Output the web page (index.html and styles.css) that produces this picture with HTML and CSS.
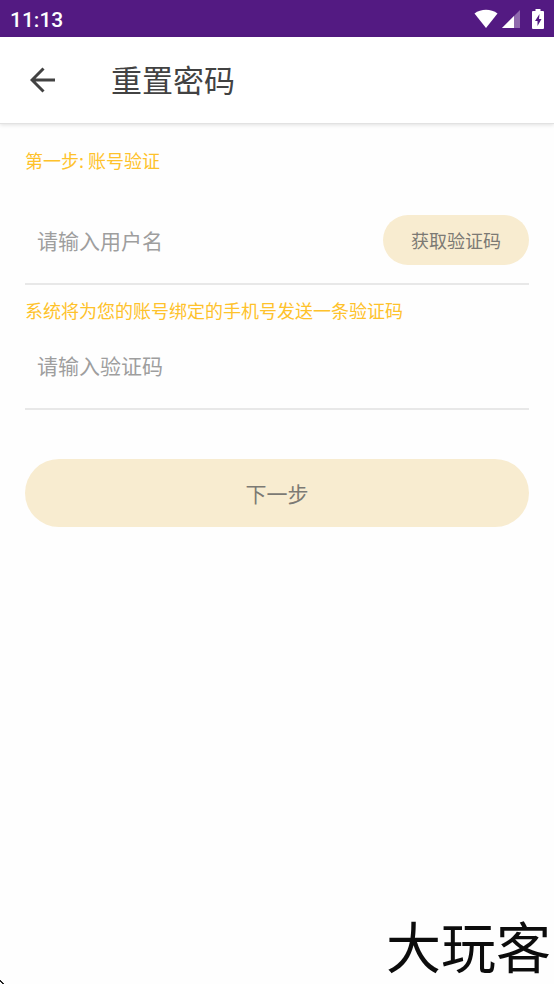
FILE: index.html
```html
<!DOCTYPE html>
<html lang="zh-CN">
<head>
  <meta charset="UTF-8" />
  <meta name="viewport" content="width=device-width, initial-scale=1" />
  <title>重置密码</title>
  <link rel="stylesheet" href="styles.css">
</head>
<body>
  <div class="status-bar">
    <span class="time">11:13</span>
    <div class="status-icons">
      <svg class="icon-wifi" width="24" height="20" viewBox="0 0 24 20" aria-hidden="true">
        <path d="M0.500 4.500C7 -0.500 17 -0.500 23.500 4.500L12 19Z" fill="#fff" />
      </svg>
      <svg class="icon-signal" width="18" height="18" viewBox="0 0 18 18" aria-hidden="true">
        <path d="M0 18L18 0V18Z" fill="#fff" fill-opacity="0.35" />
        <path d="M0 18L12 6V18Z" fill="#fff" />
      </svg>
      <svg class="icon-battery" width="12" height="20" viewBox="0 0 12 20" aria-hidden="true">
        <path fill-rule="evenodd" d="M3.500 0H8.500V2H11Q12 2 12 3V19Q12 20 11 20H1Q0 20 0 19V3Q0 2 1 2H3.500ZM7.500 5L3 12H5.500V17L9.500 10H7Z" fill="#fff" />
      </svg>
    </div>
  </div>

  <header class="header">
    <button class="back" type="button" aria-label="返回">
      <svg width="26" height="26" viewBox="0 0 26 26" fill="none" stroke="#424242" stroke-width="3" aria-hidden="true">
        <path d="M25 13H3M13.500 1.500L2 13L13.500 24.500" />
      </svg>
    </button>
    <h1 class="title">重置密码</h1>
  </header>

  <main class="wrapper">
    <form id="resetForm">
      <h2 class="tip">第一步: 账号验证</h2>

      <div class="input-box first">
        <input type="text" id="username" placeholder="请输入用户名" aria-label="用户名" />
        <button class="btn btn-code" type="button">获取验证码</button>
      </div>

      <p class="tip hint">系统将为您的账号绑定的手机号发送一条验证码</p>

      <div class="input-box">
        <input type="text" id="code" placeholder="请输入验证码" aria-label="验证码" />
      </div>

      <button class="btn btn-next" type="submit">下一步</button>
    </form>
  </main>

  <div class="watermark">大玩客</div>
  <svg class="corner" width="4" height="4" viewBox="0 0 4 4" aria-hidden="true">
    <path d="M0 0H1V1H2V2H3V3H4V4H2V3H1V2H0Z" fill="#222" />
  </svg>
</body>
</html>
```

FILE: styles.css
```css
* {
  box-sizing: border-box;
}

body {
  position: relative;
  display: flex;
  flex-direction: column;
  min-height: 100vh;
  margin: 0;
  font-family: "Noto Sans CJK SC", sans-serif;
  background-color: #fefefe;
  color: #424242;
}

.status-bar {
  display: flex;
  align-items: center;
  justify-content: space-between;
  height: 37px;
  padding: 0 10px;
  background-color: #531a82;
  color: #fff;
}

.time {
  padding-top: 2px;
  font-family: Roboto, sans-serif;
  font-size: 21px;
  font-weight: 500;
}

.status-icons {
  display: flex;
  align-items: center;
}

.icon-signal {
  margin-left: 4px;
}

.icon-battery {
  margin-left: 12px;
}

.header {
  display: flex;
  align-items: center;
  height: 87px;
  padding: 0 30px;
  background-color: #fff;
  border-bottom: 1px solid #e2e2e2;
  box-shadow: 0 1px 4px rgba(0, 0, 0, 0.12);
}

.back {
  display: flex;
  padding: 0;
  border: none;
  background: none;
  cursor: pointer;
}

.title {
  margin: 0 0 2px 55px;
  font-size: 31px;
  font-weight: 400;
  line-height: 40px;
}

.wrapper {
  flex: 1;
  padding: 24px 25px;
}

.tip {
  margin: 0;
  font-size: 18px;
  font-weight: 400;
  line-height: 24px;
  color: #fec22b;
}

.hint {
  margin-top: 13px;
}

.input-box {
  display: flex;
  align-items: center;
  height: 88px;
  border-bottom: 2px solid #e8e8e8;
}

.input-box.first {
  margin-top: 25px;
}

input {
  flex: 1;
  min-width: 0;
  padding: 12px;
  border: none;
  background: none;
  font-family: inherit;
  font-size: 21px;
  color: #424242;
  outline: none;
}

input::placeholder {
  color: #9e9e9e;
  opacity: 1;
}

.btn {
  border: none;
  border-radius: 34px;
  background-color: #f8ecd0;
  font-family: inherit;
  color: #7c7a74;
  cursor: pointer;
}

.btn-code {
  width: 146px;
  height: 50px;
  padding: 0;
  font-size: 18px;
}

.btn-next {
  width: 100%;
  height: 68px;
  margin-top: 49px;
  font-size: 21px;
}

.watermark {
  position: absolute;
  right: 3px;
  bottom: 0;
  font-size: 55px;
  font-weight: 400;
  color: #0c0c0c;
}

.corner {
  position: absolute;
  left: 0;
  bottom: 0;
}
```
